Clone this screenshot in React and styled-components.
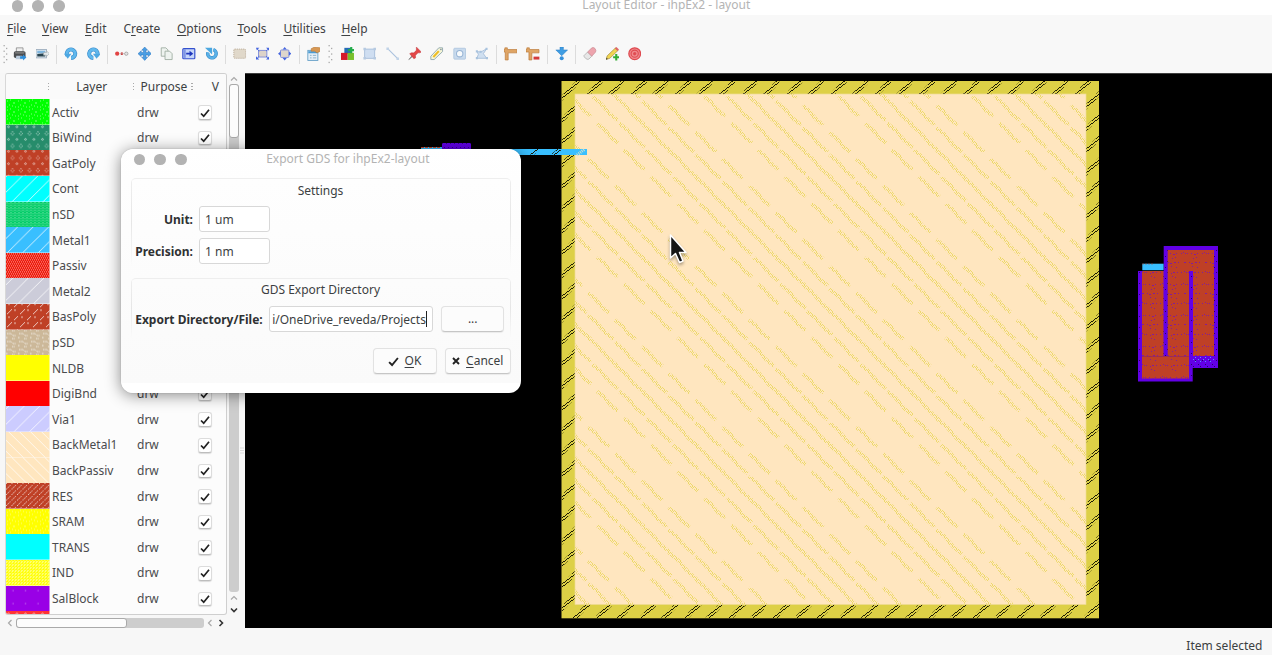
import React from 'react';
import styled, { createGlobalStyle } from 'styled-components';

const Global = createGlobalStyle`
  * { box-sizing: border-box; }
  body { margin: 0; background: #fff; font-family: "Noto Sans", sans-serif; font-size: 12px; color: #3c3f42; overflow: hidden; }
`;

const Window = styled.div`
  position: relative; width: 1272px; height: 660px; overflow: hidden;
  display: flex; flex-direction: column; background: #fff;
`;
const TitleBar = styled.header`
  height: 15px; flex: none; display: flex; align-items: flex-start; background: #fff; color: #b4b4b4;
`;
const Lights = styled.div`
  display: flex; gap: 9.3px; padding: ${p => p.$pad}; flex: none;
  i { width: 11.5px; height: 11.5px; border-radius: 50%; background: #b3b3b3; }
`;
const WindowTitle = styled.div`
  flex: 1; text-align: center; line-height: 18px; margin-top: -4px; padding-right: 4px;
`;
const MenuBar = styled.nav`
  height: 27px; flex: none; display: flex; gap: 16px; padding-left: 7px; background: #f8f8f8; line-height: 27px; color: #3e4143;
`;
const MenuItem = styled.span`
  width: ${p => p.$w}px; white-space: nowrap;
`;
const Key = styled.span`
  text-decoration: underline; text-underline-offset: 2px; text-decoration-thickness: 1px;
`;
const ToolBar = styled.div`
  height: 31px; flex: none; display: flex; align-items: center; background: #f8f8f8; padding: 0 0 7px 2.5px;
`;
const Tool = styled.span`
  width: 22.4px; height: 22px; flex: none; display: flex; align-items: center; justify-content: center;
  svg { width: 13.4px; height: 13.4px; display: block; }
`;
const ToolSep = styled.span`
  width: 6.2px; height: 19px; flex: none; display: flex; justify-content: center;
  &::after { content: ''; width: 1px; height: 100%; background: #dcdcdc; }
`;
const GripBox = styled.span`
  width: ${p => p.$w}px; flex: none; display: flex; justify-content: center; svg { display: block; }
`;
const Body = styled.main`
  height: 555px; flex: none; display: flex; background: #f7f7f7;
`;
const Side = styled.aside`
  width: 245px; flex: none; display: grid; grid-template-columns: 222px 1fr; grid-template-rows: 542px 13px; padding-left: 5px;
`;
const Table = styled.div`
  border: 1px solid #cfcfcf; border-left-color: #d8d8d8; border-radius: 3px; background: #fcfcfc; overflow: hidden;
`;
const Head = styled.div`
  display: grid; grid-template-columns: 43px 85px 58.5px 1fr; align-items: center; height: 25.3px; background: #fafafa;
`;
const HeadCell = styled.div`
  display: flex; align-items: center; justify-content: flex-end; height: 100%; white-space: nowrap;
  span { flex: 1; text-align: center; padding-left: ${p => p.$shift || 0}px; }
`;
const HeadDots = styled.i`
  width: 1.5px; height: 7px; flex: none;
  background: repeating-linear-gradient(#aaa 0 1.3px, transparent 1.3px 2.8px);
`;
const Row = styled.div`
  display: grid; grid-template-columns: 43.5px 84.5px 51.5px 41px; align-items: center; height: 25.6px; color: #4a4b4d;
`;
const Swatch = styled.svg`
  width: 43.5px; height: 25.6px; display: block;
`;
const Cell = styled.span`
  padding-left: ${p => p.$pad}px; white-space: nowrap; line-height: 18px; padding-top: 1.2px;
`;
const Check = styled.span`
  width: 14.5px; height: 14.5px; margin-left: 12.3px; margin-top: 1px; border-radius: 3px; background: #fff;
  border: 1px solid #dcdcdc; border-bottom-color: #bdbdbd; box-shadow: 0 1px 1px #0002;
  display: flex; align-items: center; justify-content: center;
`;
const VScroll = styled.div`
  display: flex; flex-direction: column; width: 13px; align-items: center; padding-left: 1px;
`;
const HScroll = styled.div`
  display: flex; align-items: center; height: 13px; padding-top: 2px; margin-left: -.5px;
`;
const Arrow = styled.span`
  display: flex; align-items: center; justify-content: center; flex: none;
  width: ${p => p.$w}px; height: ${p => p.$h}px;
`;
const Trough = styled.div`
  flex: none; width: ${p => p.$w}px; height: ${p => p.$h}px; background: #cdcdcd; border-radius: 3px;
`;
const Thumb = styled.div`
  width: ${p => p.$w}px; height: ${p => p.$h}px; background: #fcfcfc; border: 1px solid #a9a9a9; border-radius: 3px;
`;
const SideRight = styled.div`
  display: flex; align-items: center;
`;
const SplitterDots = styled.svg`
  width: 4px; height: 8px; margin: 213px 0 0 0;
`;
const Canvas = styled.svg`
  width: 1027px; height: 555px; display: block; flex: none;
`;
const Status = styled.footer`
  height: 27px; flex: none; background: #f7f7f7; text-align: right; padding: 8.5px 9.5px 0 0; line-height: 18px;
`;
const Dialog = styled.section`
  position: absolute; left: 121px; top: 149px; width: 399.5px; height: 243.5px; border-radius: 12px; overflow: hidden;
  background: linear-gradient(#fff 0, #fefefe 30px, #fafafa 234px, #fff 234px);
  display: flex; flex-direction: column;
`;
const DialogShadow = styled.div`
  position: absolute; left: 121px; top: 149px; width: 399.5px; height: 243.5px; border-radius: 12px;
  box-shadow: 0 2px 16px #0007, 0 0 1px #0006;
`;
const DialogTitle = styled.div`
  height: 29px; flex: none; display: flex; color: #b3b3b3;
  span { flex: 1; text-align: center; line-height: 19px; padding-right: 11.5px; }
`;
const Group = styled.div`
  width: 380px; margin-left: 9.5px; height: ${p => p.$h}px; margin-bottom: ${p => p.$gap}px; border-radius: 5px 5px 0 0; flex: none;
  display: flex; flex-direction: column; border-top: 1px solid #eee;
  background:
    linear-gradient(#eee, #e6e6e6 50%, transparent) left / 1px 100% no-repeat,
    linear-gradient(#eee, #e6e6e6 50%, transparent) right / 1px 100% no-repeat;
`;
const GroupTitle = styled.div`
  text-align: center; line-height: 18px; padding-top: ${p => p.$top}px; height: 27px; flex: none;
`;
const Field = styled.div`
  display: flex; align-items: center; height: 26px; margin-bottom: 6px; flex: none;
`;
const Label = styled.b`
  width: ${p => p.$w}px; text-align: right; margin-right: 6px; color: #2f3133; white-space: nowrap; flex: none;
`;
const Input = styled.div`
  width: ${p => p.$w}px; height: 26px; flex: none; background: #fff; border: 1px solid #d8d8d8; border-radius: 3px; padding: ${p => p.$path ? '0 0 0 2.5px' : '0 5px'};
  line-height: 25px; white-space: nowrap; display: flex; align-items: center;
`;
const Caret = styled.i`
  width: 1px; height: 16px; background: #222;
`;
const Button = styled.div`
  width: ${p => p.$w}px; height: 26px; border: 1px solid #e2e2e2; border-bottom: 1.5px solid #c6c6c6; border-radius: 4px; flex: none;
  background: #fcfcfc; display: flex; align-items: center; justify-content: center; gap: 6px; margin-left: 8px; line-height: 24px; white-space: nowrap;
  box-shadow: 0 1px 1px #0001;
  svg { flex: none; }
`;
const Actions = styled.div`
  display: flex; justify-content: flex-end; padding-right: 9.5px;
`;
const Pointer = styled.svg`
  position: absolute; left: 666px; top: 231px; width: 26px; height: 36px;
  filter: drop-shadow(0 2px 1.5px #0005);
`;

const ICONS = {
  print: <g><path d="M4 1h8v5H4z" fill="#eee" stroke="#777" strokeWidth=".8" /><rect x="1" y="5" width="14" height="8" rx="2" fill="#4a4d50" /><path d="M2 6h12l-1 2H3z" fill="#777" /><path d="M4 10.500h7l1 4H3z" fill="#bcd" /><path d="M8.500 11h3.500V9L16 12.500 12 16V14H8.500z" fill="#2f8fdc" /></g>,
  image: <g><rect x="0" y="3" width="12.500" height="10" fill="#dfe8ee" stroke="#9ab" /><path d="M1.500 4.500h9.500v3H1.500z" fill="#7fb6df" /><path d="M1.500 8.500L11 7.500V11.500H1.500z" fill="#28434f" /><path d="M9 6.500h3.500V4.500L16 8l-3.500 3.500V9.800H9z" fill="#e5eaec" stroke="#98a3a8" strokeWidth=".7" /></g>,
  undo: <g><path d="M3.900 10.200A5 5 0 1 1 8.500 13" fill="none" stroke="#3b8ccc" strokeWidth="4.800" /><path d="M3.900 10.200A5 5 0 1 1 8.500 13" fill="none" stroke="#60b8ed" strokeWidth="3.400" /><path d="M0 8h9l-4.500 6z" fill="#4da7e2" /></g>,
  move: <path d="M8 0l3.500 3.800H9.500V6.500h2.700V4.500L16 8l-3.800 3.500V9.500H9.500v2.700h2L8 16l-3.500-3.800h2V9.500H3.800v2L0 8l3.800-3.500v2h2.700V3.800h-2z" fill="#4a9ee4" stroke="#2a72bd" strokeWidth=".6" />,
  stretch: <g><circle cx="2.600" cy="8" r="2.500" fill="#e24343" /><rect x="7" y="6.500" width="2.300" height="3" fill="#cc3030" /><path d="M5.500 8h6" stroke="#b99" strokeWidth=".8" /><circle cx="13.500" cy="8" r="2" fill="#e4e4e4" stroke="#999" strokeWidth=".9" /></g>,
  copy: <g fill="#eef3ef" stroke="#99a99d" strokeWidth="1"><path d="M1.500 1h5.500l2.500 2.500V11h-8z" /><path d="M6 5h5.500L14.500 8v7H6z" /></g>,
  export: <g><rect x="1" y="2" width="14.300" height="12" rx="1" fill="#c6d6f9" stroke="#3451ce" strokeWidth="1.400" /><path d="M3.500 3v10" stroke="#3451ce" /><path d="M5 7h4V4.500L13.500 8 9 11.500V9H5z" fill="#1e37bd" /></g>,
  refresh: <g><path d="M10 3.200A5 5 0 1 1 3.500 6.500" fill="none" stroke="#3d8fcb" strokeWidth="4.200" /><path d="M10 3.200A5 5 0 1 1 3.500 6.500" fill="none" stroke="#59b1e8" strokeWidth="2.800" /><path d="M0 1h8.500v8z" fill="#4ba7e0" /></g>,
  dashed: <rect x="1" y="2.500" width="14" height="11" rx="1" fill="#e0d8ca" stroke="#b8a995" strokeWidth="1" strokeDasharray="1.500 1" />,
  zoomfit: <g><rect x="3" y="4" width="10" height="8" fill="#ddd3c9" stroke="#7484d9" /><path d="M0 1h4L1 4zM16 1v4l-4-4zM0 15v-4l4 4zM16 15h-4l4-4z" fill="#4666df" /><path d="M1 2l3 3M15 2l-3 3M1 14l3-3M15 14l-3-3" stroke="#4666df" /></g>,
  zoomsel: <g><rect x="3" y="3.500" width="10" height="9" rx="1" fill="#ded6cc" stroke="#7384d9" /><path d="M8 0l2.500 3h-5zM8 16l2.500-3h-5zM0 8l3-2.500v5zM16 8l-3-2.500v5z" fill="#4666df" /></g>,
  props: <g><rect x="1" y="4" width="12" height="12" fill="#e6f0f8" stroke="#5c9ac4" /><path d="M1.500 5h11v2.500h-11z" fill="#4b9cd4" /><path d="M3.500 10h2M7 10h4M3.500 13h2M7 13h4" stroke="#7ca5c2" /><path d="M5 2l4-2 7 1v4l-4 2-3-2H5z" fill="#d79854" stroke="#ad6e2d" strokeWidth=".6" /></g>,
  blocks: <g><path d="M4 1h8v7H4z" fill="#246bb5" /><path d="M0 7h8v8.500H0z" fill="#d4192c" /><path d="M8 7h7.500v8.500H8z" fill="#78bf2b" /><path d="M11 0h2.500v2.500H16V5h-2.500v2.500H11V5H8.500V2.500H11z" fill="#23ad48" /></g>,
  rect: <g><rect x="2" y="2.500" width="12" height="11" fill="#cfdef1" stroke="#a2bad7" /><path d="M.5 1h3v3h-3zM12.500 1h3v3h-3zM.5 12h3v3h-3zM12.500 12h3v3h-3z" fill="#b6cae1" /></g>,
  line: <g><path d="M2 2l12 12" stroke="#a9c1dd" strokeWidth="1.300" /><path d="M.5.5h3v3h-3zM12.500 12.500h3v3h-3z" fill="#c1d3e8" /></g>,
  pin: <g><path d="M1 15l5-6 1 1z" fill="#888" stroke="#888" /><path d="M10 0l6 6-2 1-2 0-3 3 0 3-2 1-5-6 2-1h3l3-3z" fill="#e34848" stroke="#b82c33" strokeWidth=".5" /></g>,
  label: <g><path d="M1 15V11L10.500 1H15v4.500L5 15z" fill="#f6f5d5" stroke="#91a9b1" strokeWidth="1.100" /><path d="M4 12L10.500 5" stroke="#efbd23" strokeWidth="2.400" /><circle cx="13" cy="3" r=".9" fill="#789" /></g>,
  via: <g><rect x="1" y="1.500" width="14" height="13" rx="1" fill="#c8daed" stroke="#acc4dd" /><circle cx="8" cy="8" r="3.800" fill="#f7fafc" stroke="#96b3d4" strokeWidth="1.200" /></g>,
  poly: <g><path d="M2.500 5.500L7 6l7-4-4 6 4 5.500H2L4 9z" fill="#cfdff0" stroke="#a3bcd9" /><path d="M1 4h2.500v2.500H1zM12.500 1H15v2.500h-2.500zM1 12h2.500v2.500H1zM13 12h2.500v2.500H13zM5.500 4.500H8V7H5.500z" fill="#a9c3de" /></g>,
  ruler: <path d="M1 1h3v2h11.500v4H5v8.500H1.500V6H0V3h1z" fill="#dfa565" stroke="#bb7b3b" strokeWidth=".8" />,
  rulerdel: <g><path d="M1 1h3v2h11.500v4H7v8.500H3.500V6H0V3h1z" fill="#dfa565" stroke="#bb7b3b" strokeWidth=".8" /><path d="M9 11.500h7V15H9z" fill="#d43b3b" /></g>,
  down: <g><path d="M6 0h4v3.500h5L8 10.500 1 3.500h5z" fill="#3f9de3" stroke="#2b7cc2" strokeWidth=".6" /><circle cx="8" cy="13.500" r="2.400" fill="#3590db" /></g>,
  eraser: <g><path d="M1 10.500L5.500 6l5 5L7 14.500Q5 15.500 3 13.500T1 10.500z" fill="#e7e7e7" stroke="#a7a7a7" strokeWidth=".8" /><path d="M5.500 6L10.500 1Q13 0 14.500 2T15 6l-4.500 5z" fill="#eda4ad" stroke="#c78991" strokeWidth=".8" /></g>,
  pencil: <g><path d="M0 15l1.500-4.500L11.500 1 14.500 4 4.500 13.500z" fill="#f1d552" stroke="#9d853b" strokeWidth=".8" /><path d="M10.500 1.800L12.500 0l3 3-1.800 1.800z" fill="#df6767" /><path d="M0 15l.7-2.200 1.500 1.500z" fill="#333" /><path d="M11 8.500h2.500V11H16v2.500h-2.500V16H11v-2.500H8.500V11H11z" fill="#35ad35" /></g>,
  target: <g fill="none" stroke="#df4a50"><circle cx="8" cy="8" r="7" fill="#f08a8d" strokeWidth="1.500" /><circle cx="8" cy="8" r="4.300" strokeWidth="1.300" /><circle cx="8" cy="8" r="1.500" fill="#df4a50" /></g>,
};
const Icon = ({ name, flip }) => (
  <Tool><svg viewBox="0 0 16 16"><g transform={flip ? 'matrix(-1 0 0 1 16 0)' : undefined}>{ICONS[name]}</g></svg></Tool>
);
const Grip = ({ w }) => (
  <GripBox $w={w}><svg width="5" height="19">{[0, 1, 2, 3, 4, 5, 6].map(i => <rect key={i} x={i % 2 ? 3 : .5} y={i * 2.8} width="1.300" height="1.300" fill="#aaa" />)}</svg></GripBox>
);

const LAYERS = [
  ['Activ', '#00ff00', 'spark'], ['BiWind', '#268c6b', 'diamond'], ['GatPoly', '#bf4026', 'diamond'], ['Cont', '#00ffff', 'up'],
  ['nSD', '#00cc66', 'vdots'], ['Metal1', '#39bfff', 'up'], ['Passiv', '#ee1809', 'check'], ['Metal2', '#ccccd9', 'up'],
  ['BasPoly', '#bf4026', 'broken'], ['pSD', '#ccb899', 'wave'], ['NLDB', '#ffff00'], ['DigiBnd', '#ff0000'], ['Via1', '#ccccff', 'up'],
  ['BackMetal1', '#ffe6bf', 'downl'], ['BackPassiv', '#ffe6bf', 'downl'], ['RES', '#bf4026', 'dense'], ['SRAM', '#ffff00', 'spark'],
  ['TRANS', '#00ffff'], ['IND', '#ffff00', 'grid'], ['SalBlock', '#9900e6', 'rare'], ['', '#ff3333', 'diamond'],
];
const PatternSheet = styled.svg`
  display: block; width: 0; height: 0;
`;
const Patterns = () => (
  <PatternSheet>
    <defs>
      <pattern id="spark" width="11" height="9" patternUnits="userSpaceOnUse"><path d="M1 2h1M4 1h1M7 4h2M3 6h1M9 8h1M1 8h1M6 7h1" stroke="#fff" strokeOpacity=".5" /></pattern>
      <pattern id="diamond" width="8.500" height="12.500" patternUnits="userSpaceOnUse"><path d="M2.500 1v3M1 2.500h3M6.500 7.200l1.500 2-1.500 2-1.500-2z" fill="none" stroke="#fff" strokeOpacity=".85" strokeWidth=".7" strokeDasharray="1 .8" /></pattern>
      <pattern id="up" width="15.500" height="15.500" patternUnits="userSpaceOnUse"><path d="M-1 16.500L16.500-1" stroke="#fff" strokeOpacity=".85" strokeWidth=".9" /></pattern>
      <pattern id="downl" width="11" height="11" patternUnits="userSpaceOnUse"><path d="M-1-1l13 13" stroke="#fff" strokeOpacity=".8" strokeWidth=".9" /></pattern>
      <pattern id="vdots" width="4" height="2.500" patternUnits="userSpaceOnUse"><path d="M1 0v1.500M3 1v1" stroke="#fff" strokeOpacity=".5" strokeWidth=".8" /></pattern>
      <pattern id="check" width="4" height="4" patternUnits="userSpaceOnUse"><path d="M0 .5h1M2 .5h1M1 2.500h1M3 2.500h1" stroke="#fff" strokeOpacity=".6" /></pattern>
      <pattern id="broken" width="13" height="13" patternUnits="userSpaceOnUse"><path d="M1 7l5-5M8 13l4-4M8 3h2M2 10h2" stroke="#fff" strokeOpacity=".8" strokeWidth=".9" /></pattern>
      <pattern id="wave" width="12" height="8" patternUnits="userSpaceOnUse"><path d="M1 2h4l2 2h3M0 6h2M6 7h3" fill="none" stroke="#fff" strokeOpacity=".75" strokeWidth="1" strokeDasharray="1.500 .8" /></pattern>
      <pattern id="dense" width="5.500" height="5.500" patternUnits="userSpaceOnUse"><path d="M0 5.500L4.500 1" stroke="#fff" strokeOpacity=".75" strokeWidth=".9" strokeDasharray="2 .6" /></pattern>
      <pattern id="grid" width="3" height="3" patternUnits="userSpaceOnUse"><path d="M0 .5h2M.5 1v1M2 2h1" stroke="#fff" strokeOpacity=".55" strokeWidth=".9" /></pattern>
      <pattern id="rare" width="12.500" height="13" patternUnits="userSpaceOnUse"><path d="M6.500 10h1.200" stroke="#fff" strokeOpacity=".5" /></pattern>
    </defs>
  </PatternSheet>
);

const CHEVRONS = { up: 'M1 5.500l3-3 3 3', down: 'M1 2.500l3 3 3-3', left: 'M5.500 1l-3 3 3 3', right: 'M2.500 1l3 3-3 3' };
const Chevron = ({ d, dark }) => (
  <svg width="8" height="8" viewBox="0 0 8 8"><path d={CHEVRONS[d]} fill="none" stroke={dark ? '#333' : '#a9a9a9'} strokeWidth={dark ? 1.6 : 1.2} /></svg>
);
const Tick = ({ s = 10 }) => (
  <svg width={s} height={s} viewBox="0 0 10 10"><path d="M1 5.500L3.700 8.200 9 1.800" fill="none" stroke="#222" strokeWidth="1.700" /></svg>
);

/* Stipple of the back metal: diagonals of one pitch, cut by a slightly coarser cell grid. */
const backMetal = (() => {
  const P = 22.33, C = 26.8;
  let d = '';
  for (let i = -1; i < 20; i++) for (let j = -1; j < 20; j++) {
    const cx = 603 + (i - 1) * C, cy = 164.4 + (j - 3) * C;
    const off = cy - cx + 385;
    const r = Math.round(off / P) * P - off;
    const h = (C - Math.abs(r)) / 2 + 1.5;
    const mx = cx - r / 2, my = cy + r / 2;
    d += `M${(mx - h).toFixed(1)} ${(my - h + .8).toFixed(1)}L${(mx - h / 3).toFixed(1)} ${(my - h / 3 - .8).toFixed(1)}L${(mx + h / 3).toFixed(1)} ${(my + h / 3 + .8).toFixed(1)}L${(mx + h).toFixed(1)} ${(my + h - .8).toFixed(1)}`;
  }
  return d;
})();
const hatch = (() => {
  let d = '';
  for (let k = 0; k < 50; k++) {
    const s = 660 + k * 22.2;
    d += `M${s - 619} 619L${s - 81} 81`;
  }
  return d;
})();
const Layout = () => (
  <Canvas viewBox="245 73 1027 555">
    <defs>
      <pattern id="dy" width="4" height="3" patternUnits="userSpaceOnUse"><path d="M0 0h1v1H0zM2 0h1v1H2zM1 1h1v1H1zM3 1h1v1H3zM0 2h1v1H0z" fill="#ead75e" /></pattern>
      <pattern id="dk" width="4" height="3" patternUnits="userSpaceOnUse"><path d="M0 0h1v1H0zM2 1h1v1H2zM1 2h1v1H1zM3 0h1v1H3z" fill="#1d1b04" /></pattern>
      <pattern id="dr" width="21" height="31" patternUnits="userSpaceOnUse" x="1142" y="250">
        <path d="M1 3.500h1M3 3.500h1M7 3.500h1M10 4.500h2M13 3.500h1M18 3.500h1M9 8.500h1M12 7.500h1M0 12.500h2M5 12.500h1M7 13.500h2M11 12.500h2M15 12.500h1M8 16.500h1M13 17.500h1M2 22.500h1M4 22.500h1M8 23.500h1M10 22.500h2M14 22.500h1M18 22.500h1M9 26.500h1M12 27.500h1M0 21.500h1M20 2.500h1" stroke="#7514b4" strokeOpacity=".8" />
      </pattern>
      <pattern id="dp" width="7" height="11" patternUnits="userSpaceOnUse"><path d="M1 1.500h1M3 3.500h1M5 8.500h1" stroke="#16003c" strokeOpacity=".75" /></pattern>
      <pattern id="ds" width="5" height="4" patternUnits="userSpaceOnUse"><path d="M0 1.500h1M3 3.500h1" stroke="#58a0ff" strokeOpacity=".9" /></pattern>
      <clipPath id="inner"><rect x="575" y="94" width="511" height="510.500" /></clipPath>
      <clipPath id="outer"><path clipRule="evenodd" d="M562 81H1099V618H562zM575 94V604.500H1086V94z" /></clipPath>
    </defs>
    <rect x="245" y="73" width="1027" height="555" fill="#000" />
    <path d="M245 73.200H1272" stroke="#999" strokeWidth=".6" />
    <rect x="561.500" y="81" width="537.500" height="537.300" fill="#ddd046" />
    <path d={hatch} stroke="url(#dk)" strokeWidth="4" fill="none" clipPath="url(#outer)" />
    <rect x="575" y="94" width="511" height="510.500" fill="#ffe6bf" />
    <path d={backMetal} stroke="url(#dy)" strokeWidth="3.600" strokeOpacity=".85" fill="none" clipPath="url(#inner)" />
    <rect x="575" y="94" width="511" height="510.500" fill="none" stroke="#eedc93" strokeWidth=".7" />
    <path d="M421 147h22v5h-22zM510 149h77v6h-77z" fill="#39bfff" />
    <path d="M421 147.500h20" stroke="#c4482b" strokeDasharray="3 1" />
    <rect x="442" y="143" width="29" height="8" fill="#6000e6" />
    <path d="M442 143.500h29M444 147.500h25" stroke="#22004d" strokeOpacity=".6" strokeDasharray="1 3" />
    <path d="M531 155l7-6M553 155l7-6" stroke="url(#dk)" strokeWidth="3.500" />
    <path d="M577 155l8-6" stroke="#c9dfd0" strokeWidth="3" strokeDasharray="1 1" />
    <path d="M1163.700 246H1218V368H1192.700V381.500H1138V271H1163.700z" fill="#6200e6" />
    <path d="M1163.700 246H1218V368H1192.700V381.500H1138V271H1163.700z" fill="url(#dp)" />
    <path d="M1142 271H1163.500V356H1167.700V250H1214V356H1193V271H1189V378.500H1142z" fill="#bf4026" />
    <path d="M1142 271H1163.500V356H1167.700V250H1214V356H1193V271H1189V378.500H1142z" fill="url(#dr)" />
    <path d="M1142 356.500H1189" stroke="#97285a" strokeWidth=".8" />
    <rect x="1193" y="357" width="21" height="6" fill="url(#ds)" />
    <rect x="1142.300" y="263.700" width="21.300" height="6.500" fill="#39bfff" />
    <path d="M1142.500 264h12" stroke="#bf4026" strokeDasharray="1 2" />
  </Canvas>
);

const MENUS = [['', 'F', 'ile', 19], ['', 'V', 'iew', 27], ['', 'E', 'dit', 22.4], ['C', 'r', 'eate', 37.6], ['', 'O', 'ptions', 44.4], ['', 'T', 'ools', 30], ['', 'U', 'tilities', 42], ['', 'H', 'elp', 30]];

export default function App() {
  return (
    <Window>
      <Global />
      <Patterns />
      <TitleBar>
        <Lights $pad="0 0 0 11.5px"><i /><i /><i /></Lights>
        <WindowTitle>Layout Editor - ihpEx2 - layout</WindowTitle>
      </TitleBar>
      <MenuBar>{MENUS.map(([a, k, b, w]) => <MenuItem key={b} $w={w}>{a}<Key>{k}</Key>{b}</MenuItem>)}</MenuBar>
      <ToolBar>
        <Grip w={6.2} />
        <Icon name="print" /><Icon name="image" /><ToolSep />
        <Icon name="undo" /><Icon name="undo" flip /><ToolSep />
        <Icon name="stretch" /><Icon name="move" /><Icon name="copy" /><Icon name="export" /><Icon name="refresh" /><ToolSep />
        <Icon name="dashed" /><Icon name="zoomfit" /><Icon name="zoomsel" /><ToolSep />
        <Icon name="props" /><Grip w={11.8} />
        <Icon name="blocks" /><Icon name="rect" /><Icon name="line" /><Icon name="pin" /><Icon name="label" /><Icon name="via" /><Icon name="poly" /><ToolSep />
        <Icon name="ruler" /><Icon name="rulerdel" /><ToolSep />
        <Icon name="down" /><ToolSep />
        <Icon name="eraser" /><Icon name="pencil" /><Icon name="target" />
      </ToolBar>
      <Body>
        <Side>
          <Table>
            <Head>
              <HeadCell><HeadDots /></HeadCell>
              <HeadCell $shift={2}><span>Layer</span><HeadDots /></HeadCell>
              <HeadCell $shift={3}><span>Purpose</span><HeadDots /></HeadCell>
              <HeadCell $shift={12}><span>V</span></HeadCell>
            </Head>
            {LAYERS.map(([name, color, pat], i) => (
              <Row key={i}>
                <Swatch viewBox={`0 ${i * 25.6} 43.5 25.6`}>
                  <rect y={i * 25.6} width="43.500" height="25.600" fill={color} />
                  {pat && <rect y={i * 25.6} width="43.500" height="25.600" fill={`url(#${pat})`} />}
                </Swatch>
                {name && <><Cell $pad={2.5}>{name}</Cell><Cell $pad={3}>drw</Cell><Check><Tick /></Check></>}
              </Row>
            ))}
          </Table>
          <SideRight>
            <VScroll>
              <Arrow $w={11} $h={11}><Chevron d="up" /></Arrow>
              <Trough $w={10.5} $h={508}><Thumb $w={10.5} $h={54} /></Trough>
              <Arrow $w={11} $h={12}><Chevron d="up" /></Arrow>
              <Arrow $w={11} $h={11}><Chevron d="down" dark /></Arrow>
            </VScroll>
            <SplitterDots><path d="M.5 1h3M.5 3.500h3M.5 6h3" stroke="#bbb" strokeDasharray="1 1" /></SplitterDots>
          </SideRight>
          <HScroll>
            <Arrow $w={11.5} $h={11}><Chevron d="left" /></Arrow>
            <Trough $w={188} $h={10}><Thumb $w={111} $h={10} /></Trough>
            <Arrow $w={12} $h={11}><Chevron d="left" /></Arrow>
            <Arrow $w={10} $h={11}><Chevron d="right" dark /></Arrow>
          </HScroll>
        </Side>
        <Layout />
      </Body>
      <Status>Item selected</Status>
      <DialogShadow />
      <Dialog>
        <DialogTitle>
          <Lights $pad="4.5px 0 0 12.5px"><i /><i /><i /></Lights>
          <span>Export GDS for ihpEx2-layout</span>
        </DialogTitle>
        <Group $h={90} $gap={10}>
          <GroupTitle $top={3}>Settings</GroupTitle>
          <Field><Label $w={62.5}>Unit:</Label><Input $w={70.5}>1 um</Input></Field>
          <Field><Label $w={62.5}>Precision:</Label><Input $w={70.5}>1 nm</Input></Field>
        </Group>
        <Group $h={60} $gap={10}>
          <GroupTitle $top={2}>GDS Export Directory</GroupTitle>
          <Field><Label $w={132.2}>Export Directory/File:</Label><Input $w={164.3} $path>i/OneDrive_reveda/Projects<Caret /></Input><Button $w={63.5}>...</Button></Field>
        </Group>
        <Actions>
          <Button $w={64}><Tick s={11} /><span><Key>O</Key>K</span></Button>
          <Button $w={66.5}><svg width="8" height="8" viewBox="0 0 8 8"><path d="M1 1l6 6M7 1L1 7" stroke="#222" strokeWidth="1.900" /></svg><span><Key>C</Key>ancel</span></Button>
        </Actions>
      </Dialog>
      <Pointer viewBox="0 0 26 36"><path d="M4.500 4v23l5-4.500 4 9 3.500-1.500-3.500-8.500h6.500z" fill="#151515" stroke="#fff" strokeWidth="1.500" strokeLinejoin="round" /></Pointer>
    </Window>
  );
}
